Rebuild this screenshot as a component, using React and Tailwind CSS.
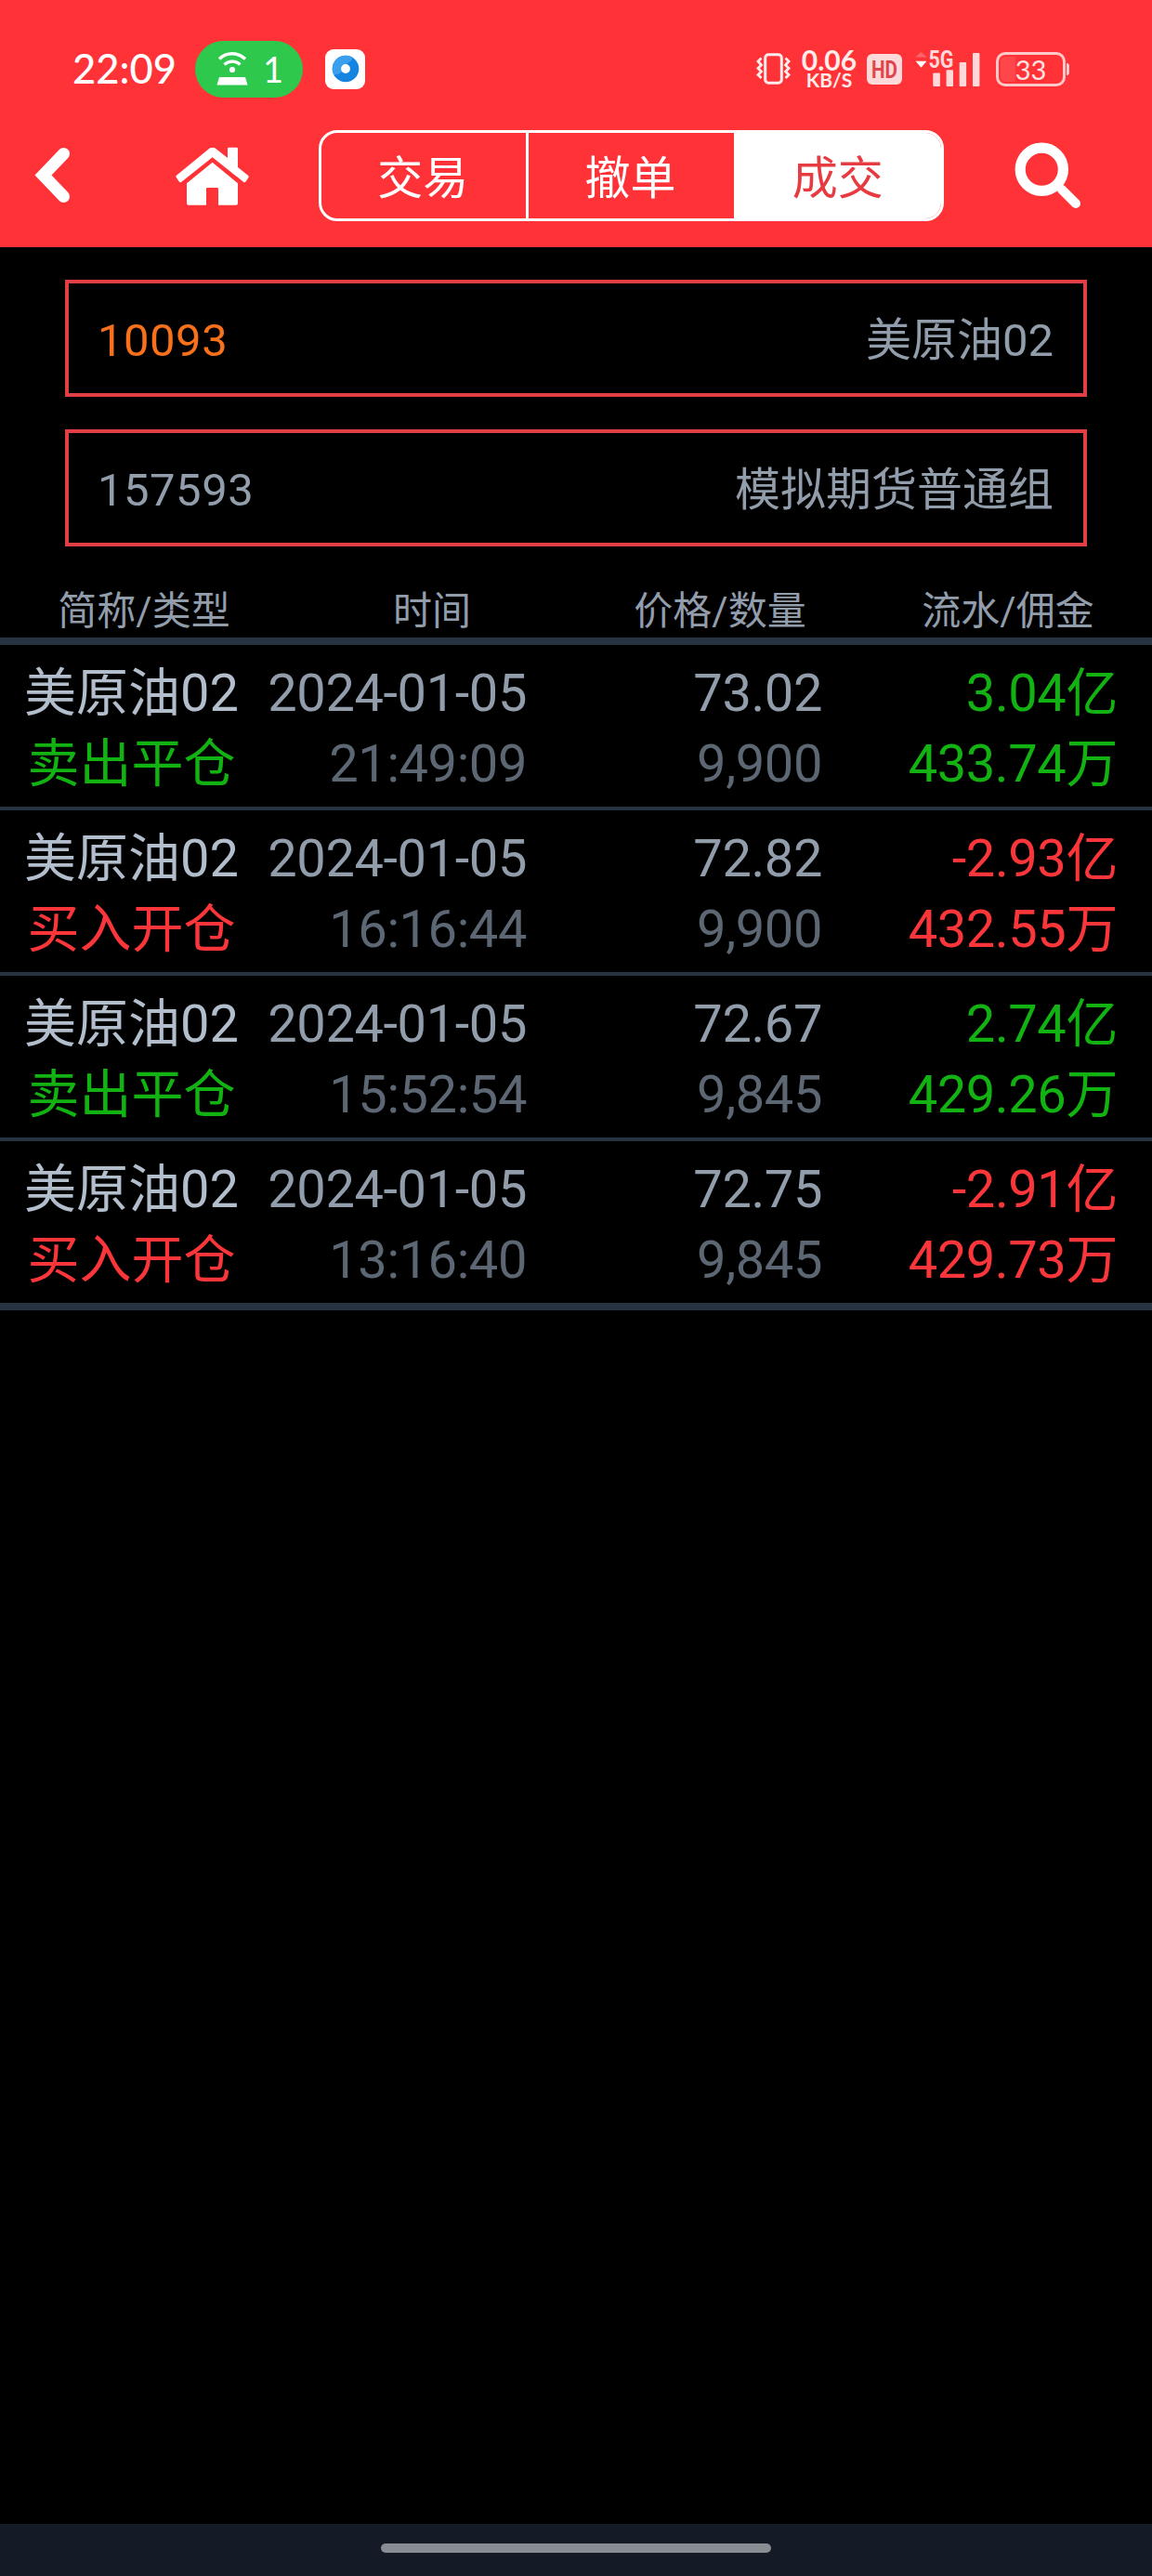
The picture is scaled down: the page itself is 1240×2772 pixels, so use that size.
import clsx from 'clsx'

const tabs = ['交易', '撤单', '成交']

const columns = ['简称/类型', '时间', '价格/数量', '流水/佣金']

const trades = [
  { name: '美原油02', type: '卖出平仓', date: '2024-01-05', time: '21:49:09', price: '73.02', qty: '9,900', turnover: '3.04亿', fee: '433.74万', side: 'sell' },
  { name: '美原油02', type: '买入开仓', date: '2024-01-05', time: '16:16:44', price: '72.82', qty: '9,900', turnover: '-2.93亿', fee: '432.55万', side: 'buy' },
  { name: '美原油02', type: '卖出平仓', date: '2024-01-05', time: '15:52:54', price: '72.67', qty: '9,845', turnover: '2.74亿', fee: '429.26万', side: 'sell' },
  { name: '美原油02', type: '买入开仓', date: '2024-01-05', time: '13:16:40', price: '72.75', qty: '9,845', turnover: '-2.91亿', fee: '429.73万', side: 'buy' },
]

function HotspotIcon() {
  return (
    <svg width="36" height="38" viewBox="0 0 36 38" fill="none" stroke="#fff">
      <path d="M4 8.5a20 20 0 0 1 28 0" strokeWidth="3.4" />
      <path d="M9.5 14.5a12.5 12.5 0 0 1 17 0" strokeWidth="3.4" />
      <circle cx="18" cy="20" r="3.1" fill="#fff" stroke="none" />
      <path d="M4 28h28l2.5 8.6h-33z" fill="#fff" stroke="none" />
    </svg>
  )
}

function VibrateIcon() {
  return (
    <svg width="42" height="36" viewBox="0 0 42 36" fill="none" stroke="#ffeceb">
      <rect x="11.7" y="2.7" width="17.6" height="30.6" rx="3.5" strokeWidth="3" />
      <path d="M7.5 6.5 4 10l3.5 4L4 17.5l3.5 3.5L4 24.5 7.5 28" strokeWidth="2.8" />
      <path d="M33.5 6.5 37 10l-3.5 4 3.5 3.5-3.5 3.5 3.5 3.5-3.5 3.5" strokeWidth="2.8" />
    </svg>
  )
}

function HdIcon() {
  return (
    <svg className="overflow-visible" width="38" height="33" viewBox="0 0 38 33">
      <rect width="38" height="33" rx="6" fill="#ffd9d9" />
      <text x="5" y="26" textLength="28" lengthAdjust="spacingAndGlyphs" fill="#e0454b" className="font-['Roboto',sans-serif] text-[26px] font-bold">HD</text>
    </svg>
  )
}

function SignalIcon() {
  return (
    <svg className="overflow-visible" width="72" height="42" viewBox="0 0 72 42" fill="#ffd9d9">
      <path d="M1.5 8.5 7.5 3l6 5.5z" opacity=".3" />
      <path d="M1.5 12.7h12l-6 7z" fill="#fff" />
      <text x="15.5" y="20" textLength="27" lengthAdjust="spacingAndGlyphs" className="font-['Roboto',sans-serif] text-[25px] font-bold">5G</text>
      <rect x="20.3" y="25.5" width="7.6" height="14.5" rx="1" />
      <rect x="34.6" y="22.3" width="7.4" height="17.7" rx="1" />
      <rect x="48.7" y="14" width="7.4" height="26" rx="1" />
      <rect x="63" y="4" width="7.4" height="36" rx="1" />
    </svg>
  )
}

function Battery({ level }) {
  return (
    <div className="flex items-center gap-px">
      <div className="relative flex h-[37px] w-[75px] items-center justify-center rounded-[10px] border-3 border-[#ffc9c9]">
        <div className="absolute inset-y-[2px] left-[2px] rounded-l-[5px] bg-white/10" style={{ width: `${level * 0.7}%` }} />
        <span className="relative font-['Lato',sans-serif] text-[29px] leading-none text-[#ffe3e3]">{level}</span>
      </div>
      <div className="h-[13px] w-[3px] rounded-r-sm bg-[#ffc9c9]" />
    </div>
  )
}

function StatusBar() {
  return (
    <div className="flex h-[126px] items-center pt-[22px] pr-[89px] pl-[78px] font-['Lato',sans-serif] text-white">
      <span className="w-[132px] text-[43.5px] leading-none font-medium">22:09</span>
      <div className="flex h-[61px] w-[116px] items-center rounded-full bg-[#2ec84d] pl-[22px]">
        <HotspotIcon />
        <span className="ml-[15px] text-[38px] leading-none">1</span>
      </div>
      <div className="ml-6 flex size-[43px] items-center justify-center rounded-[9px] bg-white">
        <svg width="30" height="30" viewBox="0 0 30 30">
          <circle cx="15" cy="15" r="14.3" fill="#1583e0" />
          <path d="M15 .7A14.3 14.3 0 0 0 2 21C8 22 14 18 15 10c3-1 6-3 8-7A14.3 14.3 0 0 0 15 .7z" fill="#3aa0ee" />
          <circle cx="15" cy="15" r="4.9" fill="#fff" />
        </svg>
      </div>

      <div className="ml-auto flex items-center">
        <VibrateIcon />
        <div className="ml-[6px] flex w-[65px] flex-col items-center font-bold text-[#ffeceb]">
          <span className="text-[30px] leading-[24px]">0.06</span>
          <span className="text-[21px] leading-[20px]">KB/S</span>
        </div>
        <div className="ml-[8px]">
          <HdIcon />
        </div>
        <div className="ml-[13px]">
          <SignalIcon />
        </div>
        <div className="ml-4">
          <Battery level={33} />
        </div>
      </div>
    </div>
  )
}

function NavBar() {
  return (
    <div className="flex h-[126px] items-center">
      <svg className="ml-[36px]" width="42" height="66" viewBox="0 0 42 66" fill="none" stroke="#fff" strokeWidth="13" strokeLinecap="round">
        <path d="M32.5 9.5 10.5 32.5l22 23" />
      </svg>
      <svg className="ml-[110px]" width="81" height="65" viewBox="564 108 243 195" fill="#fff">
        <path d="M678 115q8-4 16 0l41 32v-30q0-4 4-4h25q4 0 4 4v60l33 26q4 4 1 8l-8 12q-4 5-8 1L686 145 586 224q-4 4-8-1l-8-12q-4-5 0-8z" />
        <path d="M686 161 603 229v64q0 6 6 6h57v-52q0-4 4-4h31q4 0 4 4v52h57q6 0 6-6v-64z" />
      </svg>
      <div className="ml-[74px] flex h-[98px] w-[673px] overflow-hidden rounded-[20px] border-3 border-white">
        {tabs.map((tab, i) => (
          <button
            key={tab}
            className={clsx(
              'flex flex-1 items-center justify-center pt-[7px] pr-[2px] text-[49px] leading-none',
              i > 0 && 'border-l-3 border-white',
              i === 2 ? 'bg-white text-[#e63c41]' : 'text-white'
            )}
          >
            {tab}
          </button>
        ))}
      </div>
      <svg className="ml-[75px]" width="74" height="74" viewBox="0 0 74 74" fill="none" stroke="#fff">
        <circle cx="30.3" cy="30.3" r="23.1" strokeWidth="11.2" />
        <path d="M52 52 67 67" strokeWidth="10" strokeLinecap="round" />
      </svg>
    </div>
  )
}

function Field({ code, label, active }) {
  return (
    <div className="flex h-[126px] items-center justify-between border-4 border-[#e23f45] pt-[5px] pr-[32px] pl-[31px] text-[49px] text-[#929dac]">
      <span className={clsx('tracking-[0.5px]', active && 'text-[#f8701a]')}>{code}</span>
      <span>{label}</span>
    </div>
  )
}

function TradeRow({ trade }) {
  const sideColor = trade.side === 'sell' ? 'text-[#12b212]' : 'text-[#fa363b]'

  return (
    <div className="grid h-[178px] grid-cols-[283px_284px_318px_318px] border-b-4 border-[#263442] pt-[14px] text-right text-[56px] leading-[76px] tracking-[-0.4px] last:h-[182px] last:border-b-8">
      <div className="text-center tracking-normal">
        <p className="text-[#b3becd]">{trade.name}</p>
        <p className={sideColor}>{trade.type}</p>
      </div>
      <div>
        <p className="text-[#929dac]">{trade.date}</p>
        <p className="text-[#5c6773]">{trade.time}</p>
      </div>
      <div>
        <p className="text-[#929dac]">{trade.price}</p>
        <p className="text-[#5c6773]">{trade.qty}</p>
      </div>
      <div className={sideColor}>
        <p>{trade.turnover}</p>
        <p>{trade.fee}</p>
      </div>
    </div>
  )
}

export default function App() {
  return (
    <div className="flex h-[2772px] w-[1240px] flex-col bg-black font-['Roboto','Noto_Sans_CJK_SC',sans-serif]">
      <header className="h-[266px] bg-[#ff3337]">
        <StatusBar />
        <NavBar />
      </header>

      <main className="flex-1">
        <div className="flex flex-col gap-[35px] px-[70px] pt-[35px]">
          <Field code="10093" label="美原油02" active />
          <Field code="157593" label="模拟期货普通组" />
        </div>

        <div className="grid h-[106px] grid-cols-4 border-b-8 border-[#263442] pt-[49px] text-center text-[42px] leading-[42px] text-[#929dac]">
          {columns.map((col) => (
            <span key={col}>{col}</span>
          ))}
        </div>

        <div>
          {trades.map((trade) => (
            <TradeRow key={trade.time} trade={trade} />
          ))}
        </div>
      </main>

      <footer className="flex h-[56px] justify-center bg-[#141b26] pt-[21px]">
        <div className="h-[10px] w-[420px] rounded-full bg-[#888d94]" />
      </footer>
    </div>
  )
}
